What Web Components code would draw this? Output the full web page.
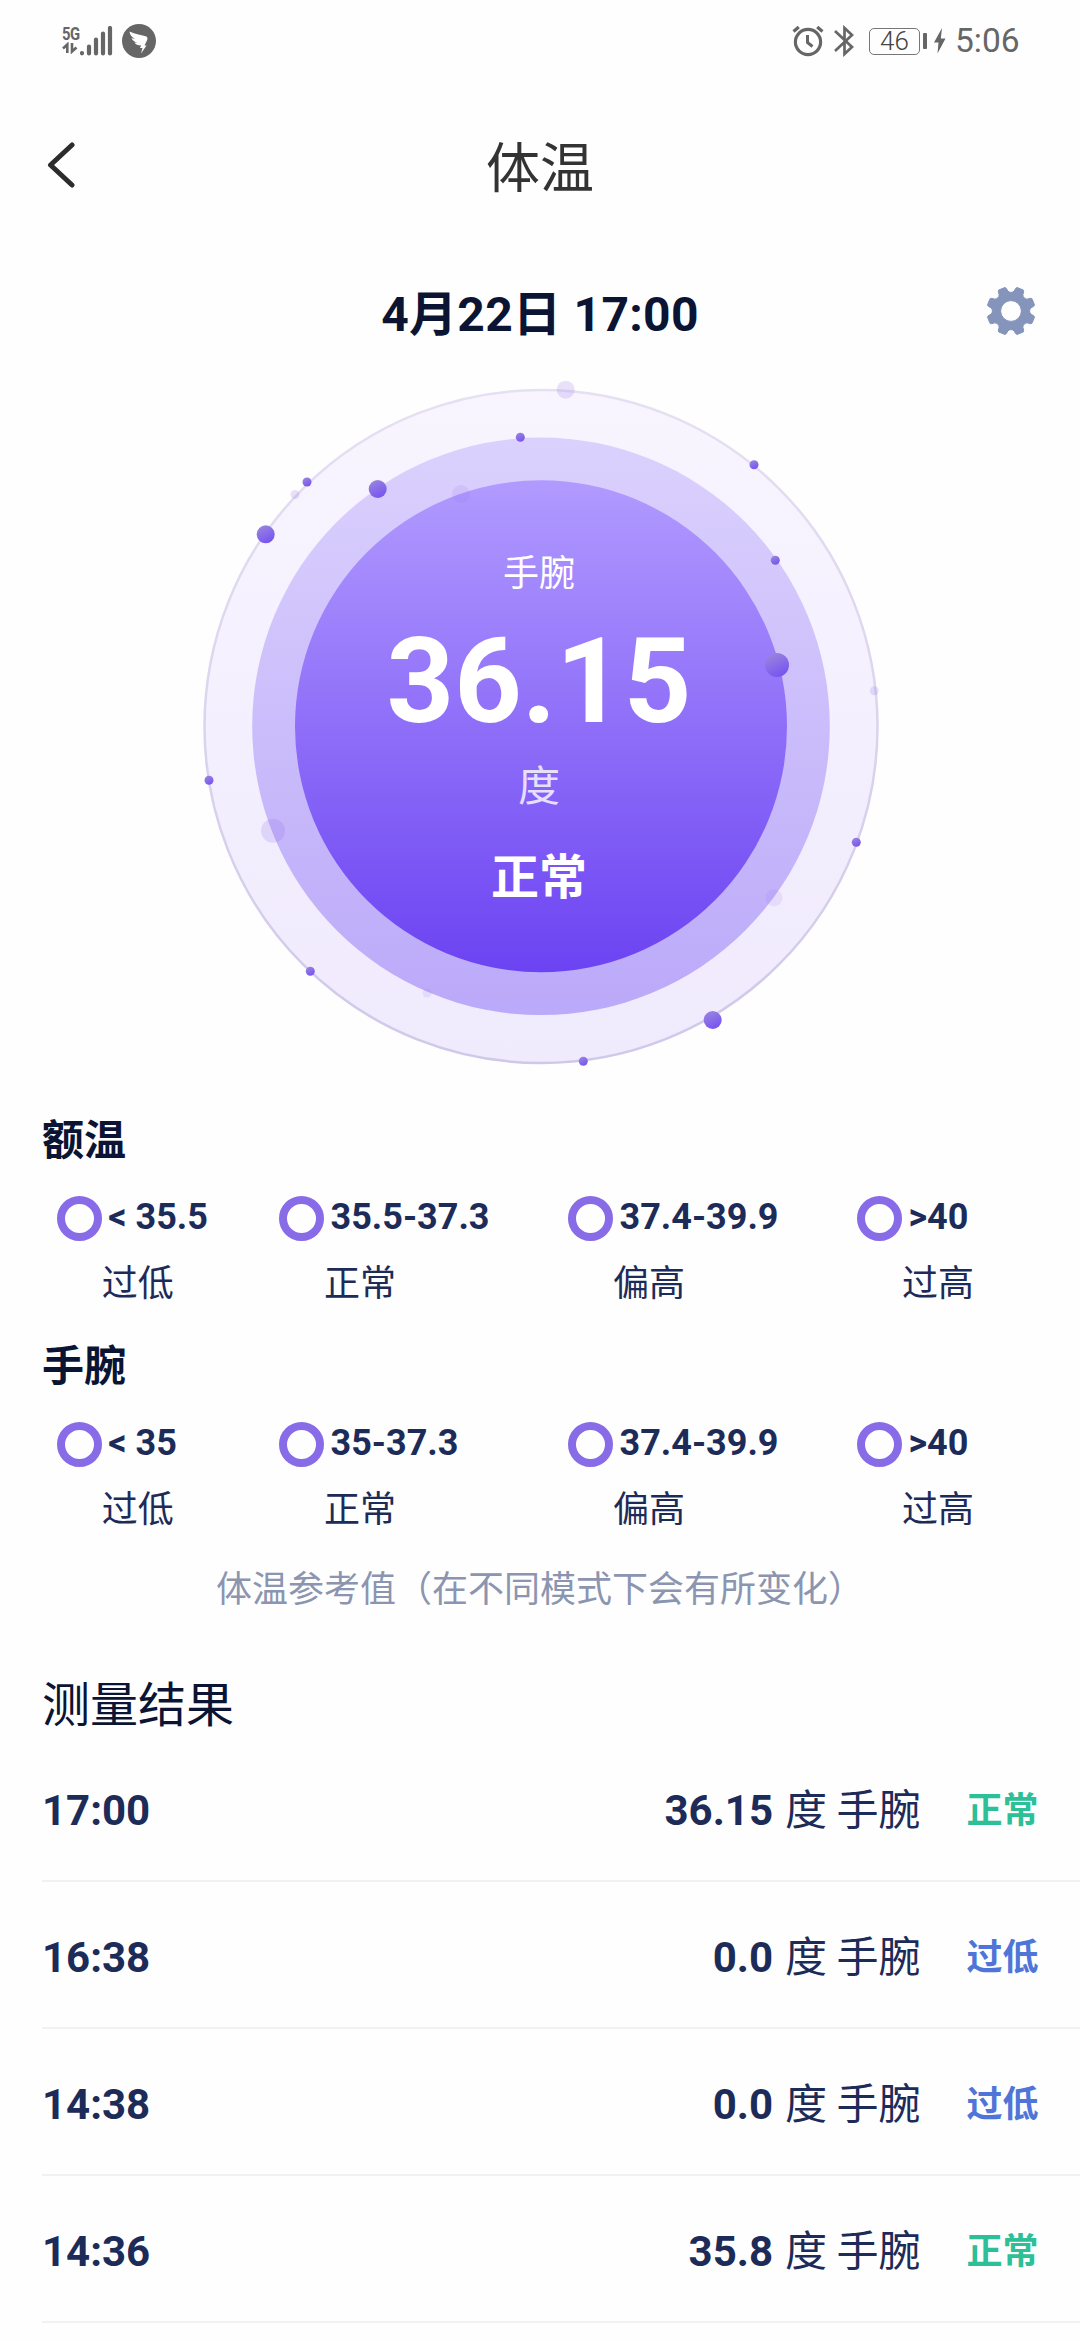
<!DOCTYPE html>
<html lang="zh-CN">
<head>
<meta charset="utf-8">
<title>体温</title>
<style>
  html, body { margin: 0; background: #fefefe; }
  body { width: 1080px; height: 2340px; overflow: hidden; font-family: Roboto, "Noto Sans CJK SC", sans-serif; color: #1d2b58; }
</style>
</head>
<body>
<temperature-page></temperature-page>
<script>
const define = (name, html, setup) => {
  const template = document.createElement('template');
  template.innerHTML = html;
  customElements.define(name, class extends HTMLElement {
    constructor() {
      super();
      this.attachShadow({ mode: 'open' }).append(template.content.cloneNode(true));
      if (setup) setup(this.shadowRoot);
    }
  });
};

define('status-bar', `
<style>
  :host { display: flex; box-sizing: border-box; height: 82px; padding: 0 61px 0 62px; align-items: center; color: #666; }
  svg { display: block; flex: none; }
  .net { display: flex; align-items: flex-end; height: 30px; }
  .gen { width: 18px; height: 31px; }
  b { display: block; font: 700 19px/17px "Roboto"; letter-spacing: -0.5px; transform: scaleX(.78); transform-origin: 0 0; }
  .battery { display: flex; align-items: center; margin-left: 15px; }
  .level { box-sizing: border-box; width: 51px; height: 27px; border: 1.5px solid #777; border-radius: 5px; font: 300 26px/25px Roboto; text-align: center; color: #444; }
  .nub { width: 4px; height: 16px; border-radius: 1px; background: #666; margin-left: 3px; }
  .space { flex: 1; }
  time { font: 400 33.5px/40px Roboto; margin-left: 9px; width: 64px; }
</style>
<div class="net">
  <div class="gen"><b>5G</b>
    <svg width="18" height="12" viewBox="0 0 18 12" fill="none" stroke="#666" stroke-width="2.600"><path d="M5.300 11V2.500L1 6.500M10 1V9.500L14.500 5.500"/></svg>
  </div>
  <svg width="34" height="30" viewBox="80 25 34 30" stroke="#666" stroke-width="4.200" stroke-linecap="round"><path d="M82 52.200V52.300M89 45.500V52.500M96 38.500V52.500M103 32.500V52.500M110 27V52.500"/></svg>
</div>
<svg style="margin-left:8px" width="34" height="34" viewBox="0 0 34 34"><circle cx="17" cy="17" r="17" fill="#666"/><path fill="#fff" d="M7.500 7.500C13 10 20 11 24.500 12.500Q26.200 13.500 25.200 16L22.500 21.500H24.500L19 29.500L20.500 24H18L19.200 21.500Q14 21.500 12.500 18.500L15.500 18.800Q10.500 17 9.500 14.200L13 14.800Q8 12.500 7.500 7.500Z"/></svg>
<div class="space"></div>
<svg width="32" height="32" viewBox="0 0 32 32" fill="none" stroke="#666"><circle cx="16" cy="17" r="12.600" stroke-width="3.200"/><path stroke-width="3" d="M15.500 10V17.500L20.500 21.500"/><path stroke-width="3.200" d="M1.500 6.500L6.800 2M30.500 6.500L25.200 2"/></svg>
<svg style="margin-left:10px" width="20" height="32" viewBox="0 0 20 32" fill="none" stroke="#666" stroke-width="2.700"><path d="M1 6L18 22L10.500 29V3L18 10L1 26"/></svg>
<div class="battery"><div class="level">46</div><div class="nub"></div></div>
<svg style="margin-left:7px" width="12" height="26" viewBox="0 0 12 26"><path fill="#666" d="M8 0L0 14.500H4.500L3.500 25.500L11.500 10.500H6.800Z"/></svg>
<time>5:06</time>`);

define('title-bar', `
<style>
  :host { display: grid; grid-template-columns: 120px 1fr 120px; height: 166px; align-items: center; }
  svg { margin-left: 46px; display: block; }
  h1 { margin: 0; text-align: center; font-size: 54px; line-height: 80px; font-weight: 400; color: #333; padding-top: 9px; }
</style>
<svg width="30" height="46" viewBox="0 0 30 46" fill="none" stroke="#2c2c2c" stroke-width="5" stroke-linecap="round" stroke-linejoin="round"><path d="M26 3L4.500 23L26 43"/></svg>
<h1><slot></slot></h1>`);

define('date-bar', `
<style>
  :host { display: grid; grid-template-columns: 120px 1fr 120px; height: 126px; align-items: center; }
  h2 { grid-column: 2; margin: 0; text-align: center; font-size: 48px; line-height: 70px; font-weight: 700; color: #0b1433; padding-top: 7px; letter-spacing: 0.300px; }
  svg { display: block; margin-left: 26px; }
</style>
<h2><slot></slot></h2>
<svg width="50" height="50" viewBox="-25 -25 50 50"><path fill="#8594bb" stroke="#8594bb" stroke-linejoin="round" fill-rule="evenodd"/></svg>`,
root => {
  // Gear outline: eight tapered teeth around a hub, with a round hole.
  const points = [];
  for (let k = 0; k < 8; k++) {
    for (const [offset, radius] of [[-22.5, 18.6], [-17.5, 19], [-13.5, 20.2], [-11, 23], [-8, 24.3], [8, 24.3], [11, 23], [13.5, 20.2], [17.5, 19]]) {
      const a = (22.5 + k * 45 + offset) * Math.PI / 180;
      points.push((radius * Math.sin(a)).toFixed(2) + ' ' + (-radius * Math.cos(a)).toFixed(2));
    }
  }
  root.querySelector('path').setAttribute('d', 'M' + points.join('L') + 'ZM10.400 0A10.400 10.400 0 1 0 -10.400 0A10.400 10.400 0 1 0 10.400 0Z');
});

define('gauge-dial', `
<style>
  :host { display: grid; height: 708px; justify-items: center; }
  svg, .read { grid-area: 1 / 1; }
  svg { width: 1080px; height: 708px; display: block; }
  .read { display: flex; flex-direction: column; align-items: center; color: #fff; width: 1078px; justify-self: start; padding-top: 174px; }
  .site { font-size: 36px; line-height: 52px; }
  .num { font-size: 118px; line-height: 140px; font-weight: 700; margin-top: 12px; }
  .unit { font-size: 42px; line-height: 60px; margin-top: 5px; opacity: .8; }
  .state { font-size: 48px; line-height: 70px; font-weight: 700; margin-top: 26px; }
</style>
<svg viewBox="0 374 1080 708">
  <defs>
    <linearGradient id="o" x2="0" y2="1"><stop stop-color="#f8f5ff"/><stop offset="1" stop-color="#f0eafd"/></linearGradient>
    <linearGradient id="l" x2="0" y2="1"><stop stop-color="#e5e0f2"/><stop offset="1" stop-color="#cfc8e9"/></linearGradient>
    <linearGradient id="m" x2="0" y2="1"><stop stop-color="#dbd1fd"/><stop offset="1" stop-color="#bba9f9"/></linearGradient>
    <linearGradient id="i" x2="0" y2="1"><stop stop-color="#b19aff"/><stop offset="1" stop-color="#6c43f2"/></linearGradient>
    <linearGradient id="d" x1=".2" x2=".7" y2="1"><stop stop-color="#9a86dd"/><stop offset="1" stop-color="#7652f2"/></linearGradient>
  </defs>
  <circle cx="541" cy="726.500" r="336.500" fill="url(#o)" stroke="url(#l)" stroke-width="2.500"/>
  <circle cx="541" cy="726.300" r="288.800" fill="url(#m)"/>
  <g fill="#8f70e8" opacity=".2">
    <circle cx="565.700" cy="389.700" r="9"/><circle cx="295" cy="494.500" r="4.500"/>
    <circle cx="874.300" cy="690.700" r="4.500"/>
    <circle cx="273" cy="830.700" r="12"/>
  </g>
  <circle cx="541" cy="726.300" r="246" fill="url(#i)"/>
  <g fill="#8f70e8" opacity=".13">
    <circle cx="461" cy="494" r="9"/><circle cx="427" cy="993" r="4.500"/><circle cx="774" cy="898" r="8.500"/>
  </g>
  <g fill="url(#d)">
    <circle cx="265.700" cy="534.300" r="9"/><circle cx="307" cy="482" r="4.500"/><circle cx="377.700" cy="489" r="9"/>
    <circle cx="520.300" cy="437.300" r="4.500"/><circle cx="754" cy="464.700" r="4.500"/><circle cx="775.300" cy="560.300" r="4.500"/>
    <circle cx="777" cy="665" r="12"/><circle cx="209" cy="780.300" r="4.500"/><circle cx="310.300" cy="971.300" r="4.500"/>
    <circle cx="583.300" cy="1061.300" r="4.500"/><circle cx="712.700" cy="1020" r="9"/><circle cx="856.300" cy="842.300" r="4.500"/>
  </g>
</svg>
<div class="read">
  <div class="site"><slot name="site"></slot></div>
  <div class="num"><slot name="value"></slot></div>
  <div class="unit"><slot name="unit"></slot></div>
  <div class="state"><slot name="state"></slot></div>
</div>`);

define('range-group', `
<style>
  :host { display: block; height: 226px; }
  h3 { margin: 0; padding: 1px 0 0 42px; font-size: 42px; line-height: 60px; font-weight: 700; color: #0b1433; }
  .row { display: grid; grid-template-columns: 222.300px 289px 289px 1fr; padding: 25px 0 0 56.700px; }
</style>
<h3><slot name="title"></slot></h3>
<div class="row"><slot></slot></div>`);

define('range-item', `
<style>
  :host { display: grid; grid-template-columns: 45px auto; justify-content: start; white-space: nowrap; }
  i { box-sizing: border-box; width: 45px; height: 45px; border: 8px solid #886be6; border-radius: 50%; }
  b { font-size: 36px; line-height: 42px; font-weight: 700; padding-left: 6.500px; }
  span { grid-column: 2; font-size: 36px; line-height: 52px; margin-top: 17px; }
</style>
<i></i><b><slot></slot></b><span><slot name="label"></slot></span>`);

define('reference-note', `
<style>:host { display: block; box-sizing: border-box; height: 82px; padding-top: 2px; font-size: 36px; line-height: 52px; text-align: center; color: #8b95b0; white-space: nowrap; }</style>
<slot></slot>`);

define('result-list', `
<style>
  :host { display: block; }
  h3 { margin: 0; box-sizing: border-box; padding: 29px 0 0 42px; height: 91px; font-size: 48px; line-height: 66px; font-weight: 400; color: #0b1433; }
</style>
<h3><slot name="title"></slot></h3><slot></slot>`);

define('result-row', `
<style>
  :host { display: flex; box-sizing: border-box; height: 147px; margin-left: 42px; padding: 7px 41.500px 0 0; align-items: center; border-bottom: 2px solid #f1f1f3; font-size: 42px; line-height: 60px; white-space: nowrap; }
  .time { flex: 1; font-weight: 700; }
  .reading { word-spacing: -1px; }
  b { font-weight: 700; margin-right: 12px; }
  .status { font-size: 36px; font-weight: 700; margin-left: 46px; color: #2dbf98; }
  :host([low]) .status { color: #5075d8; }
</style>
<div class="time"><slot name="time"></slot></div>
<div class="reading"><b><slot name="value"></slot></b><slot></slot></div>
<div class="status"><slot name="status"></slot></div>`);

define('temperature-page', `
<style>
  :host { display: flex; flex-direction: column; width: 1080px; height: 2340px; overflow: hidden; background: #fefefe; }
  result-row { word-spacing: -1px; }
</style>
<status-bar></status-bar>
<title-bar>体温</title-bar>
<date-bar>4月22日 17:00</date-bar>
<gauge-dial>
  <span slot="site">手腕</span><span slot="value">36.15</span><span slot="unit">度</span><span slot="state">正常</span>
</gauge-dial>
<div style="height:28px"></div>
<range-group>
  <span slot="title">额温</span>
  <range-item>&lt; 35.5<span slot="label">过低</span></range-item>
  <range-item>35.5-37.3<span slot="label">正常</span></range-item>
  <range-item>37.4-39.9<span slot="label">偏高</span></range-item>
  <range-item>&gt;40<span slot="label">过高</span></range-item>
</range-group>
<range-group>
  <span slot="title">手腕</span>
  <range-item>&lt; 35<span slot="label">过低</span></range-item>
  <range-item>35-37.3<span slot="label">正常</span></range-item>
  <range-item>37.4-39.9<span slot="label">偏高</span></range-item>
  <range-item>&gt;40<span slot="label">过高</span></range-item>
</range-group>
<reference-note>体温参考值（在不同模式下会有所变化）</reference-note>
<result-list>
  <span slot="title">测量结果</span>
  <result-row><span slot="time">17:00</span><span slot="value">36.15</span>度 手腕<span slot="status">正常</span></result-row>
  <result-row low><span slot="time">16:38</span><span slot="value">0.0</span>度 手腕<span slot="status">过低</span></result-row>
  <result-row low><span slot="time">14:38</span><span slot="value">0.0</span>度 手腕<span slot="status">过低</span></result-row>
  <result-row><span slot="time">14:36</span><span slot="value">35.8</span>度 手腕<span slot="status">正常</span></result-row>
</result-list>`);
</script>
</body>
</html>
